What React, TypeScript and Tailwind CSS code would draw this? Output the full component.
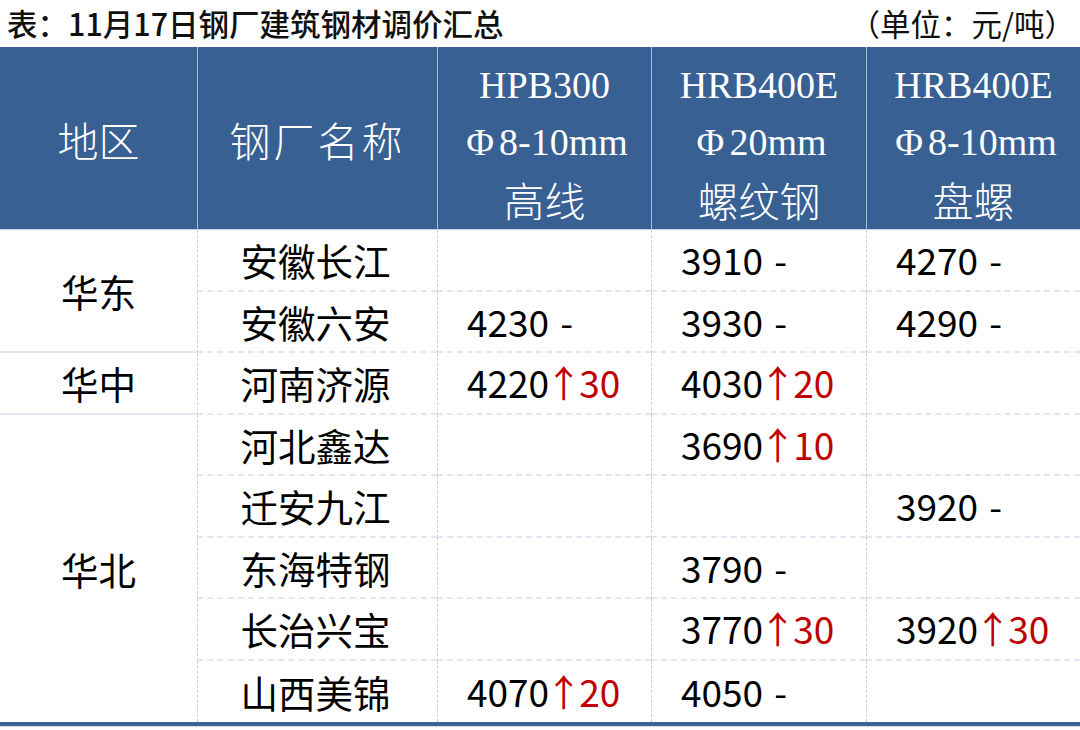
import React from 'react';

type Price = { v: string; up?: string } | null;

type Row = { name: string; prices: Price[] };

const SANS = "font-['Noto_Sans_CJK_SC','Noto_Sans',sans-serif]";
const SERIF = "font-['Liberation_Serif','Noto_Sans_CJK_SC',serif]";

// 各钢厂价格（元/吨）
const rows: Row[] = [
  { name: '安徽长江', prices: [null, { v: '3910' }, { v: '4270' }] },
  { name: '安徽六安', prices: [{ v: '4230' }, { v: '3930' }, { v: '4290' }] },
  { name: '河南济源', prices: [{ v: '4220', up: '30' }, { v: '4030', up: '20' }, null] },
  { name: '河北鑫达', prices: [null, { v: '3690', up: '10' }, null] },
  { name: '迁安九江', prices: [null, null, { v: '3920' }] },
  { name: '东海特钢', prices: [null, { v: '3790' }, null] },
  { name: '长治兴宝', prices: [null, { v: '3770', up: '30' }, { v: '3920', up: '30' }] },
  { name: '山西美锦', prices: [{ v: '4070', up: '20' }, { v: '4050' }, null] },
];

// region label shown before the given row index
const regions: Record<number, { label: string; span: string; last: boolean }> = {
  0: { label: '华东', span: 'row-span-2', last: false },
  2: { label: '华中', span: 'row-span-1', last: false },
  3: { label: '华北', span: 'row-span-5', last: true },
};

function Phi() {
  return <span className="inline-block w-[1em] text-center">Φ</span>;
}

function PriceCell({ price, last }: { price: Price; last: boolean }) {
  return (
    <div
      className={`flex items-center pl-[29px] border-l border-dashed border-l-[#cfcfcf] ${
        last ? '' : 'border-b-2 border-b-[#dfe7f1]'
      }`}
    >
      {price && (
        <span className="text-[37px] leading-none text-black whitespace-nowrap">
          {price.v}
          {price.up ? (
            <span className="text-[#c00000]">
              <span className="ml-[-4px] mr-[7px] tracking-[-10px]">↑</span>
              {price.up}
            </span>
          ) : (
            <span className="ml-[11px]">-</span>
          )}
        </span>
      )}
    </div>
  );
}

export default function App() {
  return (
    <div className={`w-[1080px] h-[730px] bg-white ${SANS}`}>
      {/* Title */}
      <div className="h-[47px] flex items-center justify-between pl-[7px] pr-[5px] text-[#111]">
        <div className="text-[30.5px] font-medium leading-none">表：11月17日钢厂建筑钢材调价汇总</div>
        <div className="text-[30.5px] leading-none">（单位：元/吨）</div>
      </div>

      {/* Table */}
      <div className="grid grid-cols-[197px_240px_214px_215px_214px] grid-rows-[183px_repeat(8,61.5px)] border-b-4 border-b-[#3a6496]">
        {/* Header */}
        <div className="bg-[#386092] border-b border-b-[#c7d4e6] flex items-center justify-center text-white text-[41px] font-light pt-[4px]">
          地区
        </div>
        <div className="bg-[#386092] border-b border-b-[#c7d4e6] border-l border-l-[#a9bcd5] flex items-center justify-center text-white text-[41px] font-light tracking-[3px] pt-[4px]">
          钢厂名称
        </div>
        <div className={`bg-[#386092] border-b border-b-[#c7d4e6] border-l border-l-[#a9bcd5] flex flex-col items-center justify-center text-white ${SERIF} text-[38px] leading-[57px] pt-[8px]`}>
          <div>HPB300</div>
          <div>
            <Phi />8-10mm
          </div>
          <div className="text-[41px] font-light font-['Noto_Sans_CJK_SC',sans-serif]">高线</div>
        </div>
        <div className={`bg-[#386092] border-b border-b-[#c7d4e6] border-l border-l-[#a9bcd5] flex flex-col items-center justify-center text-white ${SERIF} text-[38px] leading-[57px] pt-[8px]`}>
          <div>HRB400E</div>
          <div>
            <Phi />20mm
          </div>
          <div className="text-[41px] font-light font-['Noto_Sans_CJK_SC',sans-serif]">螺纹钢</div>
        </div>
        <div className={`bg-[#386092] border-b border-b-[#c7d4e6] border-l border-l-[#a9bcd5] flex flex-col items-center justify-center text-white ${SERIF} text-[38px] leading-[57px] pt-[8px]`}>
          <div>HRB400E</div>
          <div>
            <Phi />8-10mm
          </div>
          <div className="text-[41px] font-light font-['Noto_Sans_CJK_SC',sans-serif]">盘螺</div>
        </div>

        {/* Body */}
        {rows.map((row, i) => {
          const region = regions[i];
          const last = i === rows.length - 1;
          return (
            <React.Fragment key={row.name}>
              {region && (
                <div
                  className={`${region.span} flex items-center justify-center text-[37.5px] leading-none text-black ${
                    region.last ? '' : 'border-b-2 border-b-[#dfe7f1]'
                  }`}
                >
                  {region.label}
                </div>
              )}
              <div
                className={`flex items-center justify-center text-[37.5px] leading-none text-black border-l border-dashed border-l-[#cfcfcf] pr-[4px] ${
                  last ? '' : 'border-b-2 border-b-[#dfe7f1]'
                }`}
              >
                {row.name}
              </div>
              {row.prices.map((p, j) => (
                <PriceCell key={j} price={p} last={last} />
              ))}
            </React.Fragment>
          );
        })}
      </div>
      <div className="h-px bg-[#d6e0ec]" />
    </div>
  );
}
